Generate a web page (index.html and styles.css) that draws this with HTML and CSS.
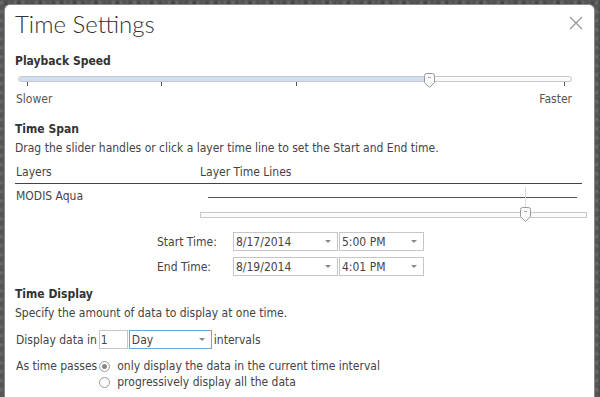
FILE: index.html
```html
<!DOCTYPE html>
<html lang="en">
<head>
    <meta charset="UTF-8">
    <title>Time Settings</title>
    <link rel="stylesheet" href="styles.css">
</head>
<body>
    <div class="dialog">
        <div class="title-bar">
            <h1>Time Settings</h1>
            <svg class="close" width="14" height="14" viewBox="0 0 14 14">
                <path d="M1 1 L13 13 M13 1 L1 13" stroke="#9a9a9a" stroke-width="1.3"/>
            </svg>
        </div>

        <h2 class="section-title first">Playback Speed</h2>
        <div class="speed">
            <div class="track">
                <div class="fill" style="width: 74.3%"></div>
                <svg class="handle speed-handle" width="11" height="15" viewBox="0 0 11 15">
                    <path d="M0.5 2.5 Q0.5 0.5 2.5 0.5 H8.5 Q10.5 0.5 10.5 2.5 V9.5 L5.5 14.5 L0.5 9.5 Z" fill="#fafafa" stroke="#9a9a9a"/>
                    <path d="M4 4.5 H7" stroke="#aaa"/>
                </svg>
            </div>
            <div class="ticks">
                <span></span><span></span><span></span><span></span><span></span>
            </div>
            <div class="speed-labels">
                <span>Slower</span>
                <span>Faster</span>
            </div>
        </div>

        <h2 class="section-title span-title">Time Span</h2>
        <p class="hint">Drag the slider handles or click a layer time line to set the Start and End time.</p>
        <div class="layers-head">
            <span>Layers</span>
            <span>Layer Time Lines</span>
        </div>
        <div class="layer-row">
            <span class="layer-name">MODIS Aqua</span>
            <div class="layer-lines">
                <div class="timeline"></div>
                <div class="span-track">
                    <div class="marker"></div>
                    <svg class="handle span-handle" width="11" height="15" viewBox="0 0 11 15">
                        <path d="M0.5 2.5 Q0.5 0.5 2.5 0.5 H8.5 Q10.5 0.5 10.5 2.5 V9.5 L5.5 14.5 L0.5 9.5 Z" fill="#fafafa" stroke="#9a9a9a"/>
                        <path d="M4 4.5 H7" stroke="#aaa"/>
                    </svg>
                </div>
            </div>
        </div>

        <div class="time-row">
            <span class="time-label">Start Time:</span>
            <div class="combo date"><span>8/17/2014</span><i class="arrow"></i></div>
            <div class="combo clock"><span>5:00 PM</span><i class="arrow"></i></div>
        </div>
        <div class="time-row">
            <span class="time-label">End Time:</span>
            <div class="combo date"><span>8/19/2014</span><i class="arrow"></i></div>
            <div class="combo clock"><span>4:01 PM</span><i class="arrow"></i></div>
        </div>

        <h2 class="section-title display-title">Time Display</h2>
        <p class="hint">Specify the amount of data to display at one time.</p>
        <div class="interval-row">
            <span>Display data in</span>
            <div class="num-box">1</div>
            <div class="combo unit"><span>Day</span><i class="arrow"></i></div>
            <span>intervals</span>
        </div>
        <div class="passes">
            <span class="passes-label">As time passes</span>
            <div class="options">
                <label class="option"><i class="radio checked"></i>only display the data in the current time interval</label>
                <label class="option"><i class="radio"></i>progressively display all the data</label>
            </div>
        </div>
    </div>
</body>
</html>
```

FILE: styles.css
```css
html, body {
    margin: 0;
    height: 397px;
    overflow: hidden;
}
body {
    font-family: 'DejaVu Sans Condensed', 'DejaVu Sans', sans-serif;
    font-size: 12px;
    color: #444;
    background-color: #555;
    background-image:
        radial-gradient(circle at 20% 30%, rgba(255,255,255,0.15) 0, transparent 3px),
        radial-gradient(circle at 70% 60%, rgba(0,0,0,0.3) 0, transparent 4px);
    background-size: 7px 9px, 11px 6px;
}
.dialog {
    margin: 4px 5px 0 4px;
    height: 420px;
    background: #fff;
    border: 1px solid #8a8a8a;
    border-bottom: none;
    border-radius: 6px 6px 0 0;
    padding: 0 11px 0 10px;
}
.title-bar {
    display: flex;
    justify-content: space-between;
    align-items: flex-start;
    height: 40px;
}
.title-bar h1 {
    margin: 4px 0 0 0;
    font-family: 'Lato', sans-serif;
    font-weight: 300;
    font-size: 24px;
    color: #333;
}
.close {
    margin: 11px 0 0 0;
}
.section-title {
    margin: 8px 0 0 0;
    font-size: 12px;
    font-weight: bold;
    color: #333;
    line-height: 16px;
}
.section-title.span-title {
    margin-top: 14px;
}
.section-title.display-title {
    margin-top: 10px;
}
.speed {
    padding: 7px 11px 0 3px;
}
.track {
    position: relative;
    height: 4px;
    border: 1px solid #c8c8c8;
    border-radius: 3px;
    background: #fafafa;
}
.fill {
    height: 100%;
    background: #cddff5;
    border-radius: 3px 0 0 3px;
}
.handle {
    position: absolute;
    display: block;
}
.speed-handle {
    left: 405px;
    top: -4px;
}
.ticks {
    display: flex;
    justify-content: space-between;
    padding: 0 7px 0 9px;
    height: 5px;
}
.ticks span {
    width: 1px;
    height: 4px;
    background: #555;
}
.speed-labels {
    display: flex;
    justify-content: space-between;
    line-height: 16px;
    margin: 4px 0 0 -2px;
    color: #555;
}
.section-title + .hint {
    margin-top: 3px;
}
.hint {
    margin: 0;
    line-height: 16px;
    color: #444;
}
.layers-head {
    display: grid;
    grid-template-columns: 184px 1fr;
    padding: 8px 0 3px 1px;
    line-height: 16px;
    border-bottom: 1px solid #444;
    margin-right: 1px;
}
.layer-row {
    display: grid;
    grid-template-columns: 184px 1fr;
    padding: 4px 0 0 1px;
    height: 44px;
}
.layer-name {
    line-height: 16px;
}
.layer-lines {
    padding-top: 9px;
}
.timeline {
    height: 1px;
    background: #555;
    margin: 0 6px 0 8px;
}
.span-track {
    position: relative;
    height: 4px;
    margin: 14px -4px 0 0;
    border: 1px solid #c8c8c8;
    background: #fbfbfb;
}
.marker {
    position: absolute;
    left: 324px;
    top: -26px;
    width: 1px;
    height: 20px;
    background: #ddd;
}
.span-handle {
    left: 319px;
    top: -6px;
}
.time-row {
    display: flex;
    align-items: center;
    padding-left: 142px;
    margin-bottom: 6px;
}
.time-label {
    width: 76px;
}
.combo {
    position: relative;
    height: 17px;
    border: 1px solid #c6c6c6;
    display: flex;
    align-items: center;
    padding-left: 2px;
    box-sizing: content-box;
    margin-right: 1px;
}
.combo span {
    flex: 1;
}
.combo.date {
    width: 101px;
}
.combo.clock {
    width: 81px;
}
.arrow {
    width: 0;
    height: 0;
    border-left: 3px solid transparent;
    border-right: 3px solid transparent;
    border-top: 3px solid #888;
    margin-right: 6px;
}
.interval-row {
    display: flex;
    align-items: center;
    margin: 9px 0 0 1px;
    height: 19px;
}
.num-box {
    width: 26px;
    height: 17px;
    border: 1px solid #c6c6c6;
    padding-left: 1px;
    margin: 0 1px 0 2px;
    line-height: 18px;
}
.combo.unit {
    width: 79px;
    border-color: #6fa4d6;
    margin-right: 2px;
}
.passes {
    display: flex;
    margin: 9px 0 0 1px;
}
.passes-label {
    line-height: 16px;
}
.option {
    display: flex;
    align-items: center;
    line-height: 16px;
}
.radio {
    width: 9px;
    height: 9px;
    border: 1px solid #999;
    border-radius: 50%;
    margin: 0 7px 0 2px;
    position: relative;
}
.radio.checked::after {
    content: "";
    position: absolute;
    left: 2px;
    top: 2px;
    width: 5px;
    height: 5px;
    border-radius: 50%;
    background: #888;
}
```
